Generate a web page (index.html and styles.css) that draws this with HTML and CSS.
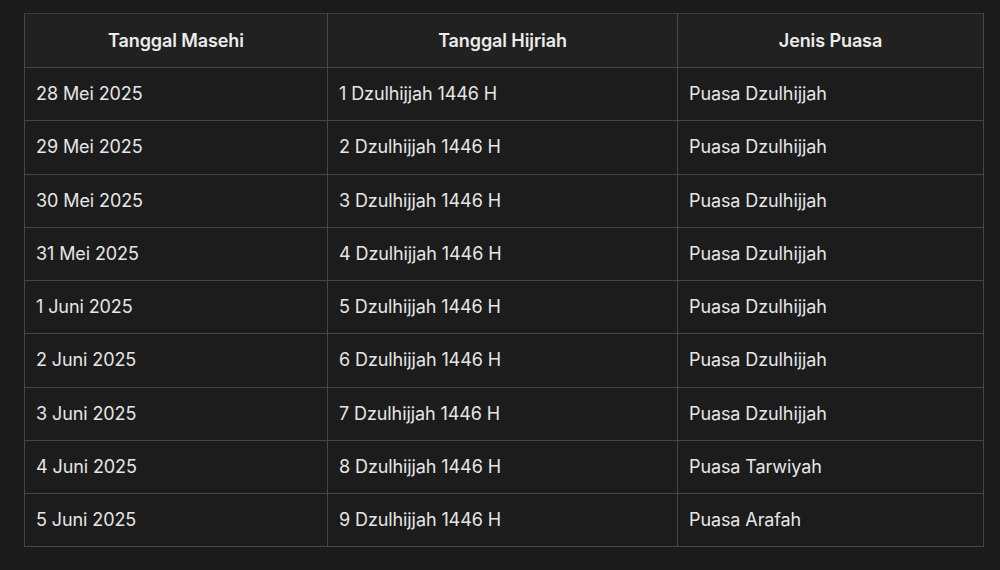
FILE: index.html
```html
<!DOCTYPE html>
<html lang="id">
<head>
<meta charset="utf-8">
<link rel="stylesheet" href="styles.css">
</head>
<body>
<div class="wrap">
<table class="puasa">
  <thead>
    <tr><th>Tanggal Masehi</th><th>Tanggal Hijriah</th><th>Jenis Puasa</th></tr>
  </thead>
  <tbody>
    <tr><td>28 Mei 2025</td><td>1 Dzulhijjah 1446 H</td><td>Puasa Dzulhijjah</td></tr>
    <tr><td>29 Mei 2025</td><td>2 Dzulhijjah 1446 H</td><td>Puasa Dzulhijjah</td></tr>
    <tr><td>30 Mei 2025</td><td>3 Dzulhijjah 1446 H</td><td>Puasa Dzulhijjah</td></tr>
    <tr><td>31 Mei 2025</td><td>4 Dzulhijjah 1446 H</td><td>Puasa Dzulhijjah</td></tr>
    <tr><td>1 Juni 2025</td><td>5 Dzulhijjah 1446 H</td><td>Puasa Dzulhijjah</td></tr>
    <tr><td>2 Juni 2025</td><td>6 Dzulhijjah 1446 H</td><td>Puasa Dzulhijjah</td></tr>
    <tr><td>3 Juni 2025</td><td>7 Dzulhijjah 1446 H</td><td>Puasa Dzulhijjah</td></tr>
    <tr><td>4 Juni 2025</td><td>8 Dzulhijjah 1446 H</td><td>Puasa Tarwiyah</td></tr>
    <tr><td>5 Juni 2025</td><td>9 Dzulhijjah 1446 H</td><td>Puasa Arafah</td></tr>
  </tbody>
</table>
</div>
</body>
</html>
```

FILE: styles.css
```css
html, body {
  margin: 0;
  padding: 0;
  background: #1b1b1b;
}
body {
  font-family: Inter, "Liberation Sans", sans-serif;
  color: #e6e6e6;
}
.wrap {
  padding: 13px 16px 0 24px;
}
.puasa {
  width: 959px;
  border-collapse: collapse;
  table-layout: fixed;
  font-size: 18px;
  letter-spacing: -0.1px;
}
.puasa th:nth-child(1) { width: 303px; }
.puasa th:nth-child(2) { width: 350px; }
.puasa th:nth-child(3) { width: 306px; }
.puasa th,
.puasa td {
  border: 1px solid #464646;
  box-sizing: border-box;
  padding: 0 11px;
  line-height: 20px;
}
.puasa th {
  background: #212121;
  font-weight: 600;
  text-align: center;
  color: #ececec;
  height: 54px;
}
.puasa thead th { border-top-color: #3a3a3a; }
.puasa td {
  background: #1c1c1c;
  font-weight: 400;
  text-align: left;
  height: 53.25px;
}
```
